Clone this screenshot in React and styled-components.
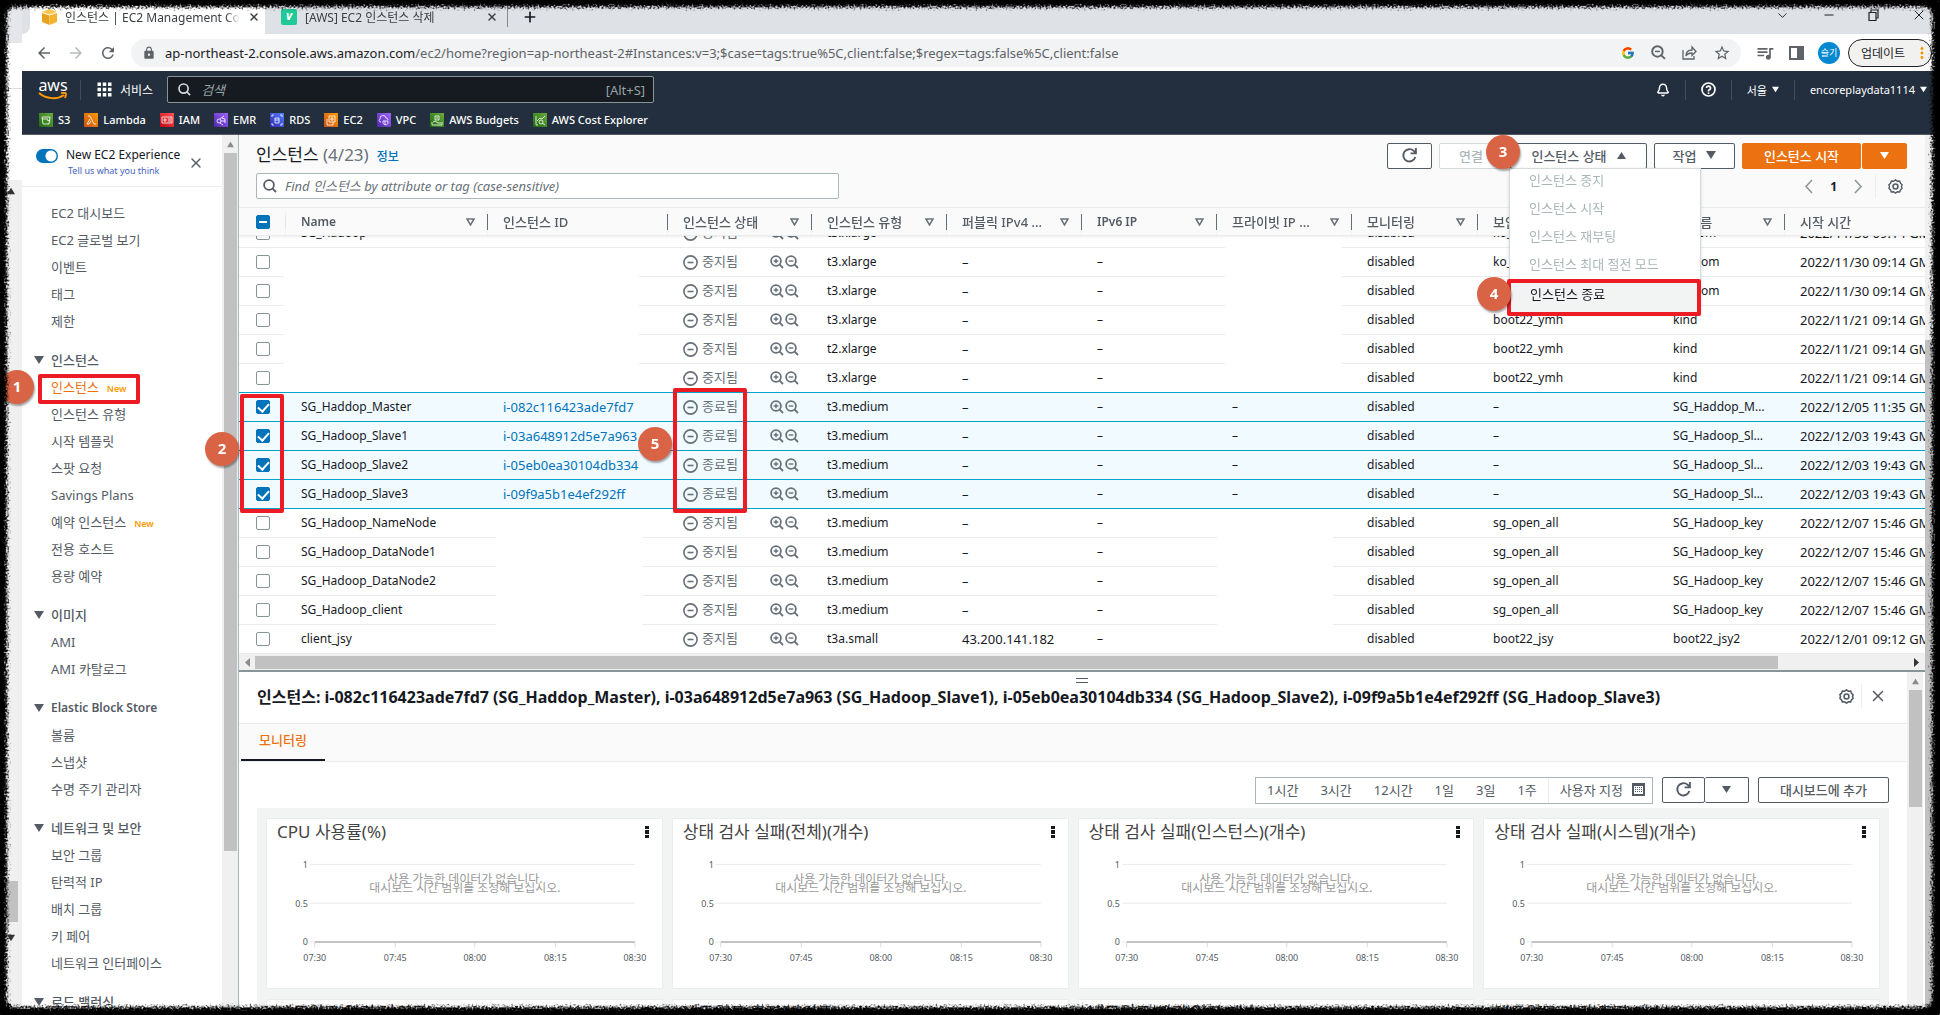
import React, { useLayoutEffect, useRef } from "react";
import styled, { createGlobalStyle } from "styled-components";
import { FcGoogle } from "react-icons/fc";
import {
  MdApps,
  MdArrowBack,
  MdArrowForward,
  MdLock,
  MdMoreVert,
  MdQueueMusic,
  MdRefresh,
  MdStarBorder,
} from "react-icons/md";
import { Bell, ChevronDown, Minus, Plus, X } from "lucide-react";

const services = [
  { name: "S3", from: "#1b660f", to: "#6cae3e", d: "M3 4h8l-1 7H4zM3 6h6M8 7l3 1" },
  { name: "Lambda", from: "#c8511b", to: "#ff9900", d: "M4 3h2l4 8h2M6 6l-3 5h2l2-3" },
  { name: "IAM", from: "#bd0816", to: "#ff5252", d: "M2 4h10v6H2zM4 6h2v2H4zM8 6h3M8 8h3" },
  { name: "EMR", from: "#4d27a8", to: "#a166ff", d: "M3 8a2 2 0 1 0 4 0a2 2 0 1 0-4 0M6 6l4-3M7 8h4M6 10l3 2M8 5l3 1v4" },
  { name: "RDS", from: "#2e27ad", to: "#527fff", d: "M5 5h4v5H5zM5 7h4M2 4V2h2M10 2h2v2M2 10v2h2M10 12h2v-2" },
  { name: "EC2", from: "#c8511b", to: "#ff9900", d: "M5 3h6v6H5zM3 6v6h6v-3M7 5h2v2H7z" },
  { name: "VPC", from: "#4d27a8", to: "#a166ff", d: "M4 9H3a2 2 0 0 1 0-3a3 3 0 0 1 6-1a2 2 0 0 1 2 2M6 8h5v2c0 1-2 2-2 2s-3-1-3-2zM8 8v4" },
  { name: "AWS Budgets", from: "#1b660f", to: "#6cae3e", d: "M5 3h4v4H5zM3 9l2-1 3 2h3M2 9v3h10V9M7 4v2" },
  { name: "AWS Cost Explorer", from: "#1b660f", to: "#6cae3e", d: "M3 3v9h2M4 8l3-3 2 1 3-3M6 9a2 2 0 1 0 4 0a2 2 0 1 0-4 0M9 10l3 2" },
];

const topLinks = ["EC2 대시보드", "EC2 글로벌 보기", "이벤트", "태그", "제한"];

const sections = [
  {
    title: "인스턴스",
    items: [
      { label: "인스턴스", isNew: true, active: true },
      { label: "인스턴스 유형" },
      { label: "시작 템플릿" },
      { label: "스팟 요청" },
      { label: "Savings Plans" },
      { label: "예약 인스턴스", isNew: true },
      { label: "전용 호스트" },
      { label: "용량 예약" },
    ],
  },
  { title: "이미지", items: [{ label: "AMI" }, { label: "AMI 카탈로그" }] },
  {
    title: "Elastic Block Store",
    latin: true,
    items: [{ label: "볼륨" }, { label: "스냅샷" }, { label: "수명 주기 관리자" }],
  },
  {
    title: "네트워크 및 보안",
    items: [
      { label: "보안 그룹" },
      { label: "탄력적 IP" },
      { label: "배치 그룹" },
      { label: "키 페어" },
      { label: "네트워크 인터페이스" },
    ],
  },
  { title: "로드 밸런싱", items: [] },
];

const columns = [
  { label: "Name", width: 202, filter: true, latin: true },
  { label: "인스턴스 ID", width: 180 },
  { label: "인스턴스 상태", width: 144, filter: true },
  { label: "인스턴스 유형", width: 135, filter: true },
  { label: "퍼블릭 IPv4 ...", width: 135, filter: true },
  { label: "IPv6 IP", width: 135, filter: true, latin: true },
  { label: "프라이빗 IP ...", width: 135, filter: true },
  { label: "모니터링", width: 126, filter: true },
  { label: "보안 그룹 이름", width: 180, filter: true },
  { label: "키 이름", width: 127, filter: true },
  { label: "시작 시간" },
];

const stopped = (name, type, group, keyName, time, ip = "–") => ({
  name, id: "", state: "중지됨", type, ip, privateIp: "", group, keyName, time,
});
const terminated = (name, id, keyName, time) => ({
  name, id, state: "종료됨", type: "t3.medium", ip: "–", privateIp: "–", group: "–", keyName, time, selected: true,
});

const instances = [
  stopped("SG_Hadoop", "t3.xlarge", "ko_com", "ko_com", "2022/11/30 09:14 GMT+9"),
  stopped("", "t3.xlarge", "ko_com", "ko_.com", "2022/11/30 09:14 GMT+9"),
  stopped("", "t3.xlarge", "ko_com", "ko_.com", "2022/11/30 09:14 GMT+9"),
  stopped("", "t3.xlarge", "boot22_ymh", "kind", "2022/11/21 09:14 GMT+9"),
  stopped("", "t2.xlarge", "boot22_ymh", "kind", "2022/11/21 09:14 GMT+9"),
  stopped("", "t3.xlarge", "boot22_ymh", "kind", "2022/11/21 09:14 GMT+9"),
  terminated("SG_Haddop_Master", "i-082c116423ade7fd7", "SG_Haddop_M…", "2022/12/05 11:35 GMT+9"),
  terminated("SG_Hadoop_Slave1", "i-03a648912d5e7a963", "SG_Hadoop_Sl…", "2022/12/03 19:43 GMT+9"),
  terminated("SG_Hadoop_Slave2", "i-05eb0ea30104db334", "SG_Hadoop_Sl…", "2022/12/03 19:43 GMT+9"),
  terminated("SG_Hadoop_Slave3", "i-09f9a5b1e4ef292ff", "SG_Hadoop_Sl…", "2022/12/03 19:43 GMT+9"),
  stopped("SG_Hadoop_NameNode", "t3.medium", "sg_open_all", "SG_Hadoop_key", "2022/12/07 15:46 GMT+9"),
  stopped("SG_Hadoop_DataNode1", "t3.medium", "sg_open_all", "SG_Hadoop_key", "2022/12/07 15:46 GMT+9"),
  stopped("SG_Hadoop_DataNode2", "t3.medium", "sg_open_all", "SG_Hadoop_key", "2022/12/07 15:46 GMT+9"),
  stopped("SG_Hadoop_client", "t3.medium", "sg_open_all", "SG_Hadoop_key", "2022/12/07 15:46 GMT+9"),
  stopped("client_jsy", "t3a.small", "boot22_jsy", "boot22_jsy2", "2022/12/01 09:12 GMT+9", "43.200.141.182"),
];

const charts = [
  "CPU 사용률(%)",
  "상태 검사 실패(전체)(개수)",
  "상태 검사 실패(인스턴스)(개수)",
  "상태 검사 실패(시스템)(개수)",
  "네트워크 입력(바이트)",
  "네트워크 출력(바이트)",
  "네트워크 패킷 입력(개수)",
  "네트워크 패킷 출력(개수)",
];

const ticks = [
  [48, "07:30"],
  [129, "07:45"],
  [209, "08:00"],
  [290, "08:15"],
  [370, "08:30"],
];

const Search = ({ size = 14, sign }) => (
  <svg width={size} height={size} viewBox="0 0 14 14" fill="none" stroke="currentColor" strokeWidth="1.8">
    <circle cx="6" cy="6" r="4.9" />
    <path d="M9.4 9.4L13 13" />
    {sign && <path strokeWidth="1.4" d={sign === "plus" ? "M3.7 6h4.6M6 3.7v4.6" : "M3.7 6h4.6"} />}
  </svg>
);

const Caret = ({ up, size = 10 }) => (
  <svg width={size} height={size} viewBox="0 0 10 10" fill="currentColor">
    <path d={up ? "M0 9h10L5 1z" : "M0 1h10L5 9z"} />
  </svg>
);

const Reload = () => (
  <svg width="17" height="17" viewBox="0 0 16 16" fill="none" stroke="currentColor" strokeWidth="1.8">
    <path d="M13.5 9.5A5.8 5.8 0 1 1 12 3.7l2 2" />
    <path d="M14 1v5H9" />
  </svg>
);

const Gear = () => (
  <svg width="15" height="15" viewBox="0 0 16 16" fill="none" stroke="currentColor" strokeWidth="1.7">
    <path d="M8 1l2 1.4 2.4-.2.9 2.3 1.7 1.6L14.4 8l.6 2-1.7 1.6-.9 2.2-2.4-.2L8 15l-2-1.4-2.4.2-.9-2.2L1 10l.6-2L1 6l1.7-1.5.9-2.3 2.4.2z" />
    <circle cx="8" cy="8" r="2.6" />
  </svg>
);

const Calendar = () => (
  <svg width="13" height="13" viewBox="0 0 13 13" fill="#545b64">
    <path fillRule="evenodd" d="M0 0h13v13H0zM2 3v8h9V3z" />
    <path d="M3 4h1v1H3zM5 4h1v1H5zM7 4h1v1H7zM9 4h1v1H9zM3 6h1v1H3zM5 6h1v1H5zM7 6h1v1H7zM9 6h1v1H9zM3 8h1v1H3zM5 8h1v1H5zM7 8h1v1H7zM9 8h1v1H9z" />
  </svg>
);

const Callout = ({ n, ...place }) => <Bubble {...place}>{n}</Bubble>;

const Chart = ({ title }) => (
  <Card>
    <CardHead>
      <h3>{title}</h3>
      <IconButton aria-label="위젯 메뉴">
        <svg width="4" height="12" viewBox="0 0 4 12" fill="#16191f">
          <path d="M0 0h4v3H0zM0 4h4v4H0zM0 9h4v3H0z" />
        </svg>
      </IconButton>
    </CardHead>
    <Plot viewBox="0 0 397 144">
      <path d="M43 19.5H370M43 58.5H370M43 97.5H48" stroke="#eaeaea" />
      {ticks.map(([x, label]) => (
        <g key={label}>
          <path d={`M${x} 98v5`} stroke="#ddd" />
          <text x={x} y="117" textAnchor="middle">{label}</text>
        </g>
      ))}
      <path d="M48 97.5H370" stroke="#c4c4c4" strokeWidth="2" />
      <text x="41" y="23" textAnchor="end">1</text>
      <text x="41" y="62" textAnchor="end">0.5</text>
      <text x="41" y="101" textAnchor="end">0</text>
      <text className="empty" x="199" y="38" textAnchor="middle">사용 가능한 데이터가 없습니다.</text>
      <text className="empty" x="199" y="47" textAnchor="middle">대시보드 시간 범위를 조정해 보십시오.</text>
    </Plot>
  </Card>
);

const InstanceRow = ({ item, next }) => (
  <Row $selected={item.selected} $blueLine={item.selected || (next && next.selected)}>
    <td>
      <Check type="checkbox" aria-label={item.name || "인스턴스"} defaultChecked={item.selected} />
    </td>
    <td>{item.name}</td>
    <NumberCell>{item.id && <a href={`#${item.id}`}>{item.id}</a>}</NumberCell>
    <td>
      <State>
        <svg width="15" height="15" viewBox="0 0 15 15" fill="none" stroke="currentColor" strokeWidth="1.6">
          <circle cx="7.5" cy="7.5" r="6.6" />
          <path d="M4.5 7.5h6" />
        </svg>
        <span>{item.state}</span>
        <Search sign="plus" />
        <Search sign="minus" />
      </State>
    </td>
    <td>{item.type}</td>
    <NumberCell>{item.ip}</NumberCell>
    <td>–</td>
    <td>{item.privateIp}</td>
    <td>disabled</td>
    <td>{item.group}</td>
    <td>{item.keyName}</td>
    <NumberCell>{item.time}</NumberCell>
  </Row>
);

const BrowserBar = () => (
  <>
    <TabStrip>
      <Tab $active>
        <svg width="15" height="16" viewBox="0 0 15 16">
          <path d="M0 4l7.5 2.500V16L0 13z" fill="#e8a020" />
          <path d="M15 4L7.500 6.500V16l7.500-3z" fill="#f5b22e" />
          <path d="M0 3l7.500-3L15 3 7.500 5.500z" fill="#fbc64b" />
        </svg>
        <span>인스턴스 | EC2 Management Console</span>
        <X size={12} strokeWidth={3} />
      </Tab>
      <Tab>
        <Velog>v</Velog>
        <span>[AWS] EC2 인스턴스 삭제</span>
        <X size={12} strokeWidth={3} />
      </Tab>
      <NewTab aria-label="새 탭"><Plus size={16} strokeWidth={2.5} /></NewTab>
      <WindowButtons>
        <ChevronDown size={15} strokeWidth={1.5} />
        <Minus size={14} strokeWidth={2} />
        <svg width="11" height="12" viewBox="0 0 11 12" fill="none" stroke="#222" strokeWidth="1.2">
          <path d="M1 3.5h7v8H1zM3 3V1h7v8H8" />
        </svg>
        <X size={16} strokeWidth={1.5} />
      </WindowButtons>
    </TabStrip>
    <AddressBar>
      <MdArrowBack />
      <MdArrowForward color="#b9bbbe" />
      <MdRefresh />
      <Omnibox>
        <MdLock size={14} />
        <p>
          ap-northeast-2.console.aws.amazon.com
          <span>/ec2/home?region=ap-northeast-2#Instances:v=3;$case=tags:true%5C,client:false;$regex=tags:false%5C,client:false</span>
        </p>
        <FcGoogle size={14} />
        <Search size={15} sign="minus" />
        <svg width="15" height="15" viewBox="0 0 15 15" fill="none" stroke="currentColor" strokeWidth="1.3">
          <path d="M1 5v9h11v-3M4 11c0-4 2-6 6-6V2l4 4.5-4 4V8c-3 0-5 1-6 3z" />
        </svg>
        <MdStarBorder size={18} />
      </Omnibox>
      <MdQueueMusic size={20} />
      <svg width="15" height="14" viewBox="0 0 15 14" fill="none" stroke="currentColor" strokeWidth="2">
        <path d="M1 1h13v12H1z" />
        <path d="M9 1h5v12H9z" fill="currentColor" />
      </svg>
      <Avatar>슬기</Avatar>
      <UpdateButton>업데이트 <MdMoreVert size={18} color="#f29900" /></UpdateButton>
    </AddressBar>
  </>
);

const AwsHeader = () => (
  <Header>
    <HeaderRow>
      <Logo href="#home">
        aws
        <svg width="30" height="8" viewBox="0 0 30 8" fill="none" stroke="#ff9900" strokeWidth="2">
          <path d="M1 1c7 6 18 7 25 2M23 1c5-1 6 0 4 5" />
        </svg>
      </Logo>
      <ServicesButton><MdApps size={21} /> 서비스</ServicesButton>
      <GlobalSearch>
        <Search size={13} />
        <input aria-label="검색" placeholder="검색" />
        <span>[Alt+S]</span>
      </GlobalSearch>
      <Account>
        <button aria-label="알림"><Bell size={14} strokeWidth={2.5} /></button>
        <button aria-label="도움말">
          <svg width="15" height="15" viewBox="0 0 15 15" fill="none" stroke="currentColor" strokeWidth="1.7">
            <circle cx="7.5" cy="7.5" r="6.5" />
            <path d="M5.500 6a2 2 0 1 1 2.500 2l-.5.5v1M7.500 10.5v1.5" />
          </svg>
        </button>
        <button>서울 <Caret size={7} /></button>
        <button>encoreplaydata1114 <Caret size={7} /></button>
      </Account>
    </HeaderRow>
    <Favorites>
      {services.map((s) => (
        <a href={`#${s.name}`} key={s.name}>
          <ServiceIcon $from={s.from} $to={s.to} viewBox="0 0 14 14">
            <path d={s.d} />
          </ServiceIcon>
          {s.name}
        </a>
      ))}
    </Favorites>
  </Header>
);

const SideNav = () => (
  <Nav>
    <NavHeader>
      <Toggle type="checkbox" id="experience" defaultChecked />
      <div>
        <label htmlFor="experience">New EC2 Experience</label>
        <a href="#feedback">Tell us what you think</a>
      </div>
      <IconButton aria-label="탐색 닫기"><X size={16} /></IconButton>
    </NavHeader>
    <NavList>
      {topLinks.map((label) => (
        <li key={label}><a href="#nav">{label}</a></li>
      ))}
    </NavList>
    {sections.map((section) => (
      <NavSection key={section.title}>
        <NavHeading $latin={section.latin}><Caret /> {section.title}</NavHeading>
        <NavList>
          {section.items.map((item) => (
            <NavItem key={item.label} $active={item.active}>
              <a href="#nav">{item.label}</a>
              {item.isNew && <small>New</small>}
              {item.active && (
                <>
                  <RedBox $left={-13} $top={0} $width={102} $height={30} />
                  <Callout n="1" $left={-51} $top={-4} />
                </>
              )}
            </NavItem>
          ))}
        </NavList>
      </NavSection>
    ))}
  </Nav>
);

const InstanceTable = () => {
  const scroller = useRef(null);

  useLayoutEffect(() => {
    scroller.current.scrollTop = scroller.current.scrollHeight;
  }, []);

  return (
    <TableArea>
      <Scroller ref={scroller}>
        <Table>
          <colgroup>
            <Col $width={47} />
            {columns.map((c) => <Col key={c.label} $width={c.width} />)}
          </colgroup>
          <thead>
            <tr>
              <th><Check type="checkbox" aria-label="모두 선택" $mixed /></th>
              {columns.map((c) => (
                <th key={c.label}>
                  <HeadCell $latin={c.latin}>
                    {c.label}
                    {c.filter && (
                      <svg width="9" height="8" viewBox="0 0 9 8" fill="none" stroke="#687078" strokeWidth="1.5">
                        <path d="M1 1h7L4.5 7z" />
                      </svg>
                    )}
                  </HeadCell>
                </th>
              ))}
            </tr>
          </thead>
          <tbody>
            {instances.map((item, i) => (
              <InstanceRow key={i} item={item} next={instances[i + 1]} />
            ))}
          </tbody>
        </Table>
      </Scroller>
      <Patch $left={45} $bottom={262} $width={355} $height={143} />
      <Patch $left={986} $bottom={262} $width={117} $height={155} />
      <Patch $left={257} $bottom={1} $width={146} $height={144} />
      <Patch $left={978} $bottom={1} $width={116} $height={144} />
      <RedBox $left={1} $bottom={141} $width={44} $height={119} />
      <Callout n="2" $left={-34} $bottom={188} />
      <RedBox $left={434} $bottom={141} $width={74} $height={125} />
      <Callout n="5" $left={399} $bottom={193} />
    </TableArea>
  );
};

const Actions = () => (
  <ActionBar>
    <Button aria-label="새로 고침" $width={45}><Reload /></Button>
    <Button disabled $width={64}>연결</Button>
    <MenuAnchor>
      <Button $width={137}>인스턴스 상태 <Caret up size={9} /></Button>
      <Menu>
        <li><button disabled>인스턴스 중지</button></li>
        <li><button disabled>인스턴스 시작</button></li>
        <li><button disabled>인스턴스 재부팅</button></li>
        <li><button disabled>인스턴스 최대 절전 모드</button></li>
        <li><button>인스턴스 종료</button></li>
        <RedBox as="li" aria-hidden="true" $left={-3} $bottom={-3} $width={194} $height={37} />
      </Menu>
      <Callout n="3" $left={-24} $top={-8} />
      <Callout n="4" $left={-33} $top={134} />
    </MenuAnchor>
    <Button $width={81}>작업 <Caret size={10} /></Button>
    <Split>
      <Button $primary $width={119}>인스턴스 시작</Button>
      <Button $primary $width={45} aria-label="시작 옵션"><Caret size={9} /></Button>
    </Split>
  </ActionBar>
);

const DetailPanel = () => (
  <Panel>
    <Handle />
    <PanelBody>
      <PanelHead>
        <h2>
          인스턴스: i-082c116423ade7fd7 (SG_Haddop_Master), i-03a648912d5e7a963 (SG_Hadoop_Slave1), i-05eb0ea30104db334
          (SG_Hadoop_Slave2), i-09f9a5b1e4ef292ff (SG_Hadoop_Slave3)
        </h2>
        <IconButton aria-label="설정"><Gear /></IconButton>
        <Rule />
        <IconButton aria-label="닫기"><X size={18} /></IconButton>
      </PanelHead>
      <Tabs><a href="#monitoring">모니터링</a></Tabs>
      <Monitoring>
        <Controls>
          <Range>
            {["1시간", "3시간", "12시간", "1일", "3일", "1주"].map((r) => (
              <button key={r}>{r}</button>
            ))}
            <button>사용자 지정 <Calendar /></button>
          </Range>
          <Joined>
            <Button aria-label="새로 고침" $width={43}><Reload /></Button>
            <Button aria-label="새로 고침 간격" $width={44}><Caret size={9} /></Button>
          </Joined>
          <Button $width={131}>대시보드에 추가</Button>
        </Controls>
        <Cards>
          {charts.map((title) => <Chart key={title} title={title} />)}
        </Cards>
      </Monitoring>
    </PanelBody>
    <VScroll><Caret size={7} up /><Thumb $length={117} /></VScroll>
  </Panel>
);

const App = () => (
  <Screen>
    <GlobalStyle />
    <BackWindow>
      <Caret size={8} up />
      <Thumb $length={41} />
      <Caret size={8} />
    </BackWindow>
    <Browser>
      <BrowserBar />
      <AwsHeader />
      <Page>
        <SideNav />
        <VScroll><Caret size={7} up /><Thumb $length={698} /></VScroll>
        <Content>
          <ContentHead>
            <TitleRow>
              <h1>인스턴스 <span>(4/23)</span></h1>
              <a href="#info">정보</a>
              <Actions />
            </TitleRow>
            <FilterRow>
              <Filter>
                <Search size={14} />
                <input aria-label="인스턴스 찾기" placeholder="Find 인스턴스 by attribute or tag (case-sensitive)" />
              </Filter>
              <Pager>
                <button aria-label="이전">
                  <svg width="9" height="15" viewBox="0 0 9 15"><path d="M8 1L2 7.5 8 14" /></svg>
                </button>
                <b>1</b>
                <button aria-label="다음">
                  <svg width="9" height="15" viewBox="0 0 9 15"><path d="M1 1l6 6.5L1 14" /></svg>
                </button>
                <Rule />
                <IconButton aria-label="기본 설정"><Gear /></IconButton>
              </Pager>
            </FilterRow>
          </ContentHead>
          <InstanceTable />
          <HScroll>
            <Arrow viewBox="0 0 5 9"><path d="M5 0v9L0 4.5z" /></Arrow>
            <HThumb />
            <Arrow viewBox="0 0 5 9" $dark><path d="M0 0v9l5-4.5z" /></Arrow>
          </HScroll>
          <DetailPanel />
        </Content>
        <PageScroll />
      </Page>
    </Browser>
    <TornEdge aria-hidden="true">
      <filter id="torn" x="-5%" y="-5%" width="110%" height="110%">
        <feGaussianBlur stdDeviation="1.5" result="soft" />
        <feTurbulence type="fractalNoise" baseFrequency="0.5" numOctaves="2" seed="4" />
        <feDisplacementMap in="soft" scale="9" xChannelSelector="R" yChannelSelector="G" />
      </filter>
      <rect rx="16" />
    </TornEdge>
  </Screen>
);

const GlobalStyle = createGlobalStyle`
  * {
    box-sizing: border-box;
  }

  body {
    margin: 0;
    background: #000;
    color: #16191f;
    font-family: "Noto Sans", "Noto Sans CJK KR", sans-serif;
    font-size: 12px;
  }

  h1, h2, h3, p, ul {
    margin: 0;
    padding: 0;
    font-weight: 400;
  }

  ul {
    list-style: none;
  }

  a {
    color: inherit;
    text-decoration: none;
  }

  button {
    display: inline-flex;
    align-items: center;
    justify-content: center;
    padding: 0;
    border: 0;
    background: none;
    color: inherit;
    font: inherit;
    white-space: nowrap;
  }

  svg {
    flex: none;
  }
`;

const Screen = styled.div`
  position: relative;
  display: flex;
  height: 100vh;
  overflow: hidden;
  background: #fff;
`;

const TornEdge = styled.svg`
  position: absolute;
  inset: 0;
  width: 100%;
  height: 100%;
  z-index: 20;
  pointer-events: none;

  rect {
    x: -1px;
    y: -1px;
    width: calc(100% + 1px);
    height: calc(100% + 1px);
    fill: none;
    stroke: #000;
    stroke-width: 16px;
    filter: url(#torn);
  }
`;

const Thumb = styled.div`
  width: 13px;
  height: ${({ $length }) => $length}px;
  background: #c1c1c1;
`;

const BackWindow = styled.aside`
  display: flex;
  flex-direction: column;
  align-items: center;
  width: 22px;
  padding-top: 187px;
  background: linear-gradient(#e4e6ea 43px, #fff 43px 88px, #ddd 88px 89px, #fff 89px 180px, #f0f0f0 180px);
  color: #333;

  ${Thumb} {
    margin-top: auto;
    margin-bottom: 12px;
  }

  svg:last-child {
    margin-bottom: 73px;
  }
`;

const Browser = styled.div`
  display: flex;
  flex: 1;
  flex-direction: column;
  min-width: 0;
`;

const TabStrip = styled.div`
  display: flex;
  align-items: center;
  height: 34px;
  background: linear-gradient(90deg, #fff 243px, #dee1e6 243px);

  &::before {
    content: "";
    width: 8px;
    height: 34px;
    border-radius: 0 0 8px 0;
    background: #dee1e6;
  }
`;

const Tab = styled.div`
  display: flex;
  align-items: center;
  gap: 8px;
  width: 235px;
  height: 34px;
  padding: 0 5px 1px 12px;
  color: #3c4043;
  font-size: 12px;

  span {
    flex: 1;
    overflow: hidden;
    white-space: nowrap;
    mask-image: linear-gradient(90deg, #000 92%, transparent);
  }

  & + & {
    width: 243px;
    height: 20px;
    padding: 0 9px 0 16px;
    border-right: 1px solid #85888c;
  }
`;

const Velog = styled.i`
  width: 16px;
  height: 16px;
  border-radius: 2px;
  background: #20c997;
  color: #fff;
  font-weight: 700;
  line-height: 14px;
  text-align: center;
`;

const NewTab = styled.button`
  margin-left: 14px;
`;

const WindowButtons = styled.div`
  display: flex;
  align-items: center;
  gap: 32px;
  margin-left: auto;
  padding: 0 13px 4px 0;
  color: #222;
`;

const AddressBar = styled.div`
  display: flex;
  align-items: center;
  gap: 14px;
  height: 37px;
  padding: 0 8px 0 13px;
  background: #fff;
  color: #5f6368;

  > svg:nth-child(-n + 3) {
    width: 18px;
    height: 18px;
  }
`;

const Omnibox = styled.div`
  display: flex;
  flex: 1;
  align-items: center;
  gap: 16px;
  min-width: 0;
  height: 28px;
  padding: 0 10px 0 11px;
  border-radius: 14px;
  background: #f1f3f4;

  p {
    flex: 1;
    margin-left: -7px;
    overflow: hidden;
    color: #202124;
    font-size: 13px;
    white-space: nowrap;
  }

  span {
    color: #5f6368;
  }
`;

const Avatar = styled.div`
  width: 22px;
  height: 22px;
  margin-right: -6px;
  border-radius: 50%;
  background: #0288d1;
  color: #fff;
  font-size: 9px;
  line-height: 22px;
  text-align: center;
`;

const UpdateButton = styled.button`
  gap: 8px;
  width: 84px;
  height: 28px;
  padding-left: 12px;
  border: 1px solid #202124;
  border-radius: 14px;
  background: #f1f1f0;
  color: #202124;
`;

const Header = styled.header`
  height: 64px;
  padding: 5px 7px 0 14px;
  border-bottom: 1px solid #545b64;
  background: #232f3e;
  color: #fff;
`;

const HeaderRow = styled.div`
  display: flex;
  align-items: center;
`;

const Logo = styled.a`
  display: flex;
  flex-direction: column;
  align-items: center;
  width: 34px;
  font-size: 16px;
  line-height: 12px;

  svg {
    margin-top: 1px;
  }
`;

const ServicesButton = styled.button`
  gap: 5px;
  height: 20px;
  margin: 0 14px 0 10px;
  padding-left: 13px;
  border-left: 1px solid #414d5c;
`;

const GlobalSearch = styled.div`
  display: flex;
  align-items: center;
  gap: 8px;
  width: 487px;
  height: 27px;
  padding: 0 8px 0 10px;
  border: 1px solid #879596;
  border-radius: 2px;
  background: #161a21;
  color: #d5dbdb;

  input {
    flex: 1;
    border: 0;
    outline: 0;
    background: none;
    font: italic 13px "Noto Sans", "Noto Sans CJK KR", sans-serif;
  }

  input::placeholder {
    color: #95a5a6;
  }

  span {
    color: #95a5a6;
    font-size: 13px;
  }
`;

const Account = styled.div`
  display: flex;
  align-items: center;
  margin-left: auto;
  font-size: 11px;

  button {
    gap: 5px;
    height: 20px;
    padding: 0 15px;
  }

  button + button {
    border-left: 1px solid #414d5c;
  }

  button:last-child {
    padding-right: 6px;
  }
`;

const Favorites = styled.nav`
  display: flex;
  gap: 14px;
  padding: 9px 0 0 3px;
  font-size: 11px;
  font-weight: 500;

  a {
    display: flex;
    align-items: center;
    gap: 5px;
    line-height: 16px;
  }
`;

const ServiceIcon = styled.svg`
  width: 14px;
  height: 14px;
  background: linear-gradient(45deg, ${({ $from }) => $from}, ${({ $to }) => $to});
  fill: none;
  stroke: #fff;
  stroke-width: 0.8;
`;

const Page = styled.div`
  display: flex;
  flex: 1;
  min-height: 0;
`;

const Nav = styled.nav`
  z-index: 1;
  width: 200px;
  background: #fff;
  color: #545b64;
  font-size: 13px;
`;

const NavHeader = styled.div`
  display: flex;
  align-items: flex-start;
  gap: 8px;
  height: 52px;
  padding: 10px 18px 0 14px;
  border-bottom: 1px solid #eaeded;

  div {
    width: 116px;
    white-space: nowrap;
  }

  label {
    display: block;
    color: #16191f;
    font-size: 12px;
    line-height: 20px;
  }

  a {
    display: block;
    padding-left: 2px;
    color: #4563c0;
    font-size: 9px;
    line-height: 12px;
  }

  button {
    margin: 10px 0 0 auto;
  }
`;

const Toggle = styled.input`
  appearance: none;
  flex: none;
  width: 22px;
  height: 14px;
  margin: 4px 0 0;
  border-radius: 7px;
  background: radial-gradient(circle at 15px 7px, #fff 5px, #0073bb 6px);
`;

const IconButton = styled.button`
  color: #545b64;
`;

const NavList = styled.ul`
  padding-left: 29px;

  li {
    height: 27px;
    line-height: 27px;
    white-space: nowrap;
  }

  ${NavHeader} + & {
    padding-top: 13px;
  }
`;

const NavSection = styled.section`
  padding-top: 12px;
`;

const NavHeading = styled.h2`
  display: flex;
  align-items: center;
  gap: 7px;
  height: 27px;
  padding: 0 0 2px 12px;
  font-size: ${({ $latin }) => ($latin ? 12 : 13)}px;
  font-weight: ${({ $latin }) => ($latin ? 600 : 500)};
`;

const NavItem = styled.li`
  position: relative;
  color: ${({ $active }) => ($active ? "#ec7211" : "inherit")};

  small {
    margin-left: 8px;
    color: #ff9900;
    font-size: 9px;
    font-weight: 600;
  }
`;

const RedBox = styled.span`
  position: absolute;
  z-index: 4;
  left: ${({ $left }) => $left}px;
  top: ${({ $top }) => ($top === undefined ? "auto" : `${$top}px`)};
  bottom: ${({ $bottom }) => ($bottom === undefined ? "auto" : `${$bottom}px`)};
  width: ${({ $width }) => $width}px;
  height: ${({ $height }) => $height}px;
  border: 4px solid #ed1c24;
  border-radius: 2px;
  pointer-events: none;
`;

const Bubble = styled.span`
  position: absolute;
  z-index: 5;
  left: ${({ $left }) => $left}px;
  top: ${({ $top }) => ($top === undefined ? "auto" : `${$top}px`)};
  bottom: ${({ $bottom }) => ($bottom === undefined ? "auto" : `${$bottom}px`)};
  width: 34px;
  height: 34px;
  border-radius: 50%;
  background: #d96445;
  box-shadow: 1px 2px 2px rgba(0, 0, 0, 0.35);
  color: #fff;
  font-size: 15px;
  font-weight: 700;
  line-height: 32px;
  text-align: center;
`;

const VScroll = styled.div`
  display: flex;
  flex: none;
  flex-direction: column;
  align-items: center;
  gap: 5px;
  width: 16px;
  padding-top: 6px;
  background: #f0f0f0;
  color: #8a8a8a;
`;

const Content = styled.main`
  position: relative;
  z-index: 2;
  display: flex;
  flex: 1;
  flex-direction: column;
  min-width: 0;
  border-left: 1px solid #aab7b8;
`;

const ContentHead = styled.div`
  padding: 8px 18px 8px 17px;
  border-bottom: 1px solid #eaeded;
  background: #fafafa;
`;

const TitleRow = styled.div`
  display: flex;
  align-items: center;
  gap: 8px;
  height: 26px;

  h1 {
    padding-bottom: 2px;
    font-size: 17px;
    line-height: 24px;
  }

  h1 span {
    color: #687078;
  }

  a {
    color: #0073bb;
    font-size: 12px;
    font-weight: 500;
  }
`;

const ActionBar = styled.div`
  display: flex;
  gap: 7px;
  margin-left: auto;
`;

const Button = styled.button`
  gap: 10px;
  width: ${({ $width }) => $width}px;
  height: 26px;
  padding-bottom: 2px;
  border: 1px solid ${({ $primary }) => ($primary ? "#ec7211" : "#545b64")};
  border-radius: 2px;
  background: ${({ $primary }) => ($primary ? "#ec7211" : "#fff")};
  color: ${({ $primary }) => ($primary ? "#fff" : "#545b64")};
  font-size: 13px;
  font-weight: 500;

  &:disabled {
    border-color: #d5dbdb;
    color: #aab7b8;
  }
`;

const MenuAnchor = styled.div`
  position: relative;
`;

const Menu = styled.ul`
  position: absolute;
  z-index: 3;
  top: 25px;
  left: -1px;
  width: 192px;
  border: 1px solid #d5dbdb;
  background: #fff;
  box-shadow: 0 1px 3px rgba(0, 0, 0, 0.15);
  font-size: 13px;

  button {
    justify-content: flex-start;
    width: 100%;
    height: 28px;
    padding: 0 0 8px 19px;
  }

  button:disabled {
    color: #aab7b8;
  }

  button:enabled {
    height: 32px;
    border: 1px solid #879596;
    background: #f2f3f3;
  }
`;

const Split = styled.div`
  display: flex;
  gap: 1px;
`;

const FilterRow = styled.div`
  display: flex;
  align-items: center;
  justify-content: space-between;
  margin-top: 4px;
`;

const Filter = styled.div`
  display: flex;
  align-items: center;
  gap: 6px;
  width: 583px;
  height: 26px;
  padding: 0 6px;
  border: 1px solid #aab7b8;
  border-radius: 2px;
  background: #fff;
  color: #545b64;

  input {
    flex: 1;
    border: 0;
    outline: 0;
    font: italic 13px "Noto Sans", "Noto Sans CJK KR", sans-serif;
  }

  input::placeholder {
    color: #687078;
  }
`;

const Rule = styled.i`
  width: 1px;
  height: 24px;
  background: #eaeded;
`;

const Pager = styled.div`
  display: flex;
  align-items: center;
  padding-right: 4px;
  gap: 17px;

  > button path {
    fill: none;
    stroke: #879596;
    stroke-width: 1.5;
  }

  > button:last-child path {
    stroke: #545b64;
  }

  ${Rule} {
    margin: 0 -5px;
  }
`;

const TableArea = styled.div`
  position: relative;
  flex: 1;
  min-height: 0;
`;

const Scroller = styled.div`
  height: 100%;
  overflow: auto;
  scrollbar-width: none;
`;

const Col = styled.col`
  width: ${({ $width }) => ($width ? `${$width}px` : "auto")};
`;

const Table = styled.table`
  width: 100%;
  border-collapse: separate;
  border-spacing: 0;
  table-layout: fixed;

  th {
    position: sticky;
    top: 0;
    z-index: 1;
    height: 28px;
    padding: 0 0 0 15px;
    border-bottom: 1px solid #eaeded;
    background: #fafafa;
    box-shadow: 0 1px 2px rgba(0, 0, 0, 0.08);
    color: #545b64;
    text-align: left;
  }

  th:first-child,
  td:first-child {
    padding-left: 17px;
    line-height: 0;
  }

  th:first-child {
    background: linear-gradient(#eaeded, #eaeded) right center / 1px 14px no-repeat #fafafa;
  }
`;

const HeadCell = styled.div`
  display: flex;
  align-items: center;
  justify-content: space-between;
  height: 16px;
  padding-right: 12px;
  border-right: 1px solid #687078;
  font-size: ${({ $latin }) => ($latin ? 12 : 13)}px;
  font-weight: ${({ $latin }) => ($latin ? 600 : 500)};
  line-height: 16px;
  white-space: nowrap;

  th:last-child & {
    border: 0;
  }
`;

const Row = styled.tr`
  td {
    height: 29px;
    padding: 0 0 0 15px;
    overflow: hidden;
    border-bottom: 1px solid ${({ $blueLine }) => ($blueLine ? "#00a1c9" : "#eaeded")};
    background: ${({ $selected }) => ($selected ? "#f1faff" : "#fff")};
    line-height: 20px;
    white-space: nowrap;
  }

  a {
    color: #0073bb;
  }
`;

const NumberCell = styled.td`
  font-size: 13px;
`;

const Check = styled.input`
  appearance: none;
  width: 14px;
  height: 14px;
  margin: 0;
  border: 1px solid ${({ $mixed }) => ($mixed ? "#0073bb" : "#879596")};
  border-radius: 2px;
  background: ${({ $mixed }) => ($mixed ? "linear-gradient(#fff, #fff) center / 8px 2px no-repeat #0073bb" : "#fff")};

  &:checked {
    display: inline-grid;
    place-items: center;
    border-color: #0073bb;
    background: #0073bb;
  }

  &:checked::before {
    content: "";
    width: 9px;
    height: 5px;
    margin-top: -2px;
    border: solid #fff;
    border-width: 0 0 2px 2px;
    transform: rotate(-48deg);
  }
`;

const State = styled.div`
  display: flex;
  align-items: center;
  gap: 1px;
  color: #687078;
  font-size: 13px;

  span {
    width: 67px;
    margin-left: 3px;
    padding-bottom: 2px;
    line-height: 18px;
  }
`;

const Patch = styled.div`
  position: absolute;
  z-index: 2;
  left: ${({ $left }) => $left}px;
  bottom: ${({ $bottom }) => $bottom}px;
  width: ${({ $width }) => $width}px;
  height: ${({ $height }) => $height}px;
  background: #fff;
`;

const HScroll = styled.div`
  display: flex;
  align-items: center;
  justify-content: space-between;
  height: 16px;
  padding: 0 6px;
  background: #f0f0f0;
`;

const Arrow = styled.svg`
  width: 5px;
  height: 9px;
  fill: ${({ $dark }) => ($dark ? "#333" : "#8a8a8a")};
`;

const HThumb = styled.div`
  width: 91%;
  height: 13px;
  margin: 0 auto 0 5px;
  background: #c1c1c1;
`;

const Panel = styled.section`
  position: relative;
  display: flex;
  flex: none;
  height: 345px;
  border-top: 2px solid #879596;
  background: #fff;

  ${VScroll} {
    margin-right: 2px;
  }
`;

const PanelBody = styled.div`
  flex: 1;
  min-width: 0;
  overflow: hidden;
`;

const Handle = styled.div`
  position: absolute;
  top: 6px;
  left: calc(50% - 6px);
  width: 12px;
  height: 5px;
  border: solid #545b64;
  border-width: 1px 0;
`;

const PanelHead = styled.div`
  display: flex;
  align-items: center;
  gap: 7px;
  height: 52px;
  padding: 0 20px 3px 18px;
  border-bottom: 1px solid #eaeded;

  h2 {
    flex: 1;
    overflow: hidden;
    font-size: 16px;
    font-weight: 700;
    white-space: nowrap;
  }
`;

const Tabs = styled.div`
  display: flex;
  height: 38px;
  padding-left: 2px;
  border-bottom: 1px solid #eaeded;
  background: #fafafa;

  a {
    width: 84px;
    border-bottom: 2px solid #16191f;
    color: #ec7211;
    font-size: 13px;
    font-weight: 500;
    line-height: 32px;
    text-align: center;
  }
`;

const Monitoring = styled.div`
  padding: 15px 18px 0 18px;
`;

const Controls = styled.div`
  display: flex;
  justify-content: flex-end;
  gap: 9px;
`;

const Range = styled.div`
  display: flex;
  height: 27px;
  padding: 0 7px 0 0;
  border: 1px solid #aab7b8;
  color: #545b64;
  font-size: 13px;

  button {
    gap: 9px;
    padding: 0 11px 2px;
  }

  button:last-child {
    padding-right: 0;
    border-left: 1px solid #eaeded;
  }
`;

const Joined = styled.div`
  display: flex;

  button + button {
    border-left: 0;
  }
`;

const Cards = styled.div`
  display: grid;
  grid-template-columns: repeat(4, 1fr);
  gap: 10px 9px;
  margin-top: 4px;
  padding: 10px 9px;
  background: #f2f3f3;
`;

const Card = styled.article`
  min-width: 0;
  border: 1px solid #eaeded;
  background: #fff;
`;

const CardHead = styled.div`
  display: flex;
  align-items: center;
  justify-content: space-between;
  height: 26px;
  padding: 0 13px 0 10px;

  h3 {
    color: #444;
    font-size: 17px;
    line-height: 22px;
    white-space: nowrap;
  }
`;

const Plot = styled.svg`
  display: block;
  width: 100%;

  text {
    fill: #545b64;
    font-size: 9px;
  }

  .empty {
    fill: #999;
    font-size: 12px;
  }
`;

const PageScroll = styled.div`
  width: 15px;
  background: linear-gradient(#f0f0f0 205px, #c1c1c1 205px);
`;

export default App;
